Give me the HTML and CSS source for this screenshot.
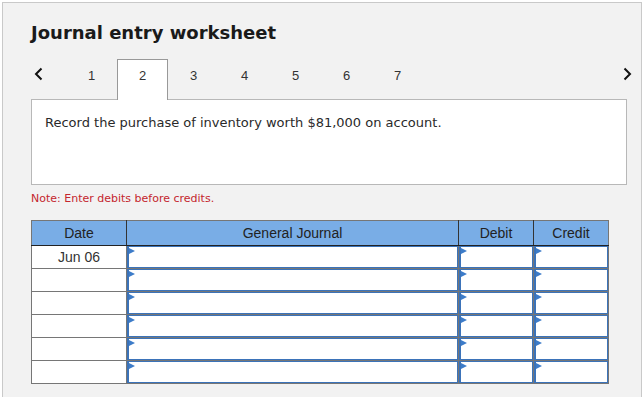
FILE: index.html
```html
<!DOCTYPE html>
<html>
<head>
<meta charset="utf-8">
<title>Journal entry worksheet</title>
<link rel="stylesheet" href="styles.css">
</head>
<body>
<div class="panel">
  <h1 class="title">Journal entry worksheet</h1>
  <div class="tabs">
    <span class="nav prev"><svg width="9" height="14" viewBox="0 0 9 14"><polyline points="7.5,1.5 2,7 7.5,12.5" fill="none" stroke="#111" stroke-width="2"/></svg></span>
    <span class="tab">1</span>
    <span class="tab active">2</span>
    <span class="tab">3</span>
    <span class="tab">4</span>
    <span class="tab">5</span>
    <span class="tab">6</span>
    <span class="tab">7</span>
    <span class="spacer"></span>
    <span class="nav next"><svg width="9" height="14" viewBox="0 0 9 14"><polyline points="1.5,1.5 7,7 1.5,12.5" fill="none" stroke="#111" stroke-width="2"/></svg></span>
  </div>
  <div class="prompt">Record the purchase of inventory worth $81,000 on account.</div>
  <p class="note">Note: Enter debits before credits.</p>
  <table class="journal">
    <colgroup>
      <col class="c-date"><col class="c-gj"><col class="c-amt"><col class="c-amt">
    </colgroup>
    <thead>
      <tr><th>Date</th><th>General Journal</th><th>Debit</th><th>Credit</th></tr>
    </thead>
    <tbody>
      <tr><td class="date">Jun 06</td><td class="in"><div class="field"></div></td><td class="in"><div class="field"></div></td><td class="in"><div class="field"></div></td></tr>
      <tr><td class="date"></td><td class="in"><div class="field"></div></td><td class="in"><div class="field"></div></td><td class="in"><div class="field"></div></td></tr>
      <tr><td class="date"></td><td class="in"><div class="field"></div></td><td class="in"><div class="field"></div></td><td class="in"><div class="field"></div></td></tr>
      <tr><td class="date"></td><td class="in"><div class="field"></div></td><td class="in"><div class="field"></div></td><td class="in"><div class="field"></div></td></tr>
      <tr><td class="date"></td><td class="in"><div class="field"></div></td><td class="in"><div class="field"></div></td><td class="in"><div class="field"></div></td></tr>
      <tr><td class="date"></td><td class="in"><div class="field"></div></td><td class="in"><div class="field"></div></td><td class="in"><div class="field"></div></td></tr>
    </tbody>
  </table>
</div>
</body>
</html>
```
FILE: styles.css
```css
html, body {
  margin: 0;
  background: #fff;
  font-family: "DejaVu Sans", Verdana, sans-serif;
  overflow: hidden;
}
.panel {
  box-sizing: border-box;
  height: 395px;
  margin: 2px 1px 0 2px;
  border: 1px solid #c9c9c9;
  border-bottom: 0;
  background: #f2f2f2;
  padding: 19px 14px 0 28px;
}
.title {
  margin: 0;
  font-size: 18px;
  line-height: 22px;
  font-weight: bold;
  color: #1a1a1a;
}
.tabs {
  display: flex;
  height: 40px;
  margin-top: 15px;
  margin-right: -14px;
  position: relative;
  z-index: 1;
}
.nav {
  display: flex;
  align-items: flex-start;
  padding-top: 8px;
}
.nav.prev {
  width: 35px;
  box-sizing: border-box;
  padding-left: 3px;
}
.nav.next {
  padding-right: 9px;
}
.spacer { flex: 1; }
.tab {
  width: 49px;
  border: 1px solid transparent;
  border-bottom: 0;
  padding-top: 8px;
  text-align: center;
  font-family: "Liberation Sans", Arial, sans-serif;
  font-size: 13px;
  line-height: 15px;
  color: #333;
}
.tab.active {
  background: #fff;
  border-color: #999;
  margin-bottom: -1px;
}
.prompt {
  height: 84px;
  box-sizing: content-box;
  background: #fff;
  border: 1px solid #b8b8b8;
  padding: 0 13px;
  font-size: 13px;
  line-height: 16px;
  color: #2a2a2a;
}
.prompt::before {
  content: "";
  display: block;
  height: 15px;
}
.note {
  margin: 7px 0 0;
  font-size: 11px;
  line-height: 13px;
  color: #c4262e;
}
.journal {
  margin-top: 15px;
  width: 577px;
  table-layout: fixed;
  border-collapse: collapse;
  border: 1px solid #767676;
  font-family: "Liberation Sans", Arial, sans-serif;
  font-size: 14px;
}
.c-date { width: 95px; }
.c-gj { width: 332px; }
.c-amt { width: 75px; }
.journal th {
  height: 24px;
  padding: 0;
  background: #79ade6;
  color: #222;
  font-weight: normal;
  border-right: 1px solid #333;
  border-bottom: 1px solid #222;
  vertical-align: middle;
}
.journal th:last-child { border-right: 1px solid #767676; }
.journal td {
  height: 22px;
  padding: 0;
  border: 1px solid #767676;
  background: #fff;
}
.journal td.date {
  text-align: center;
  color: #333;
  vertical-align: top;
  padding-top: 3px;
  height: 19px;
}
.field {
  position: relative;
  box-sizing: border-box;
  height: 22px;
  border: 1px solid #3b73b9;
  border-left-width: 2px;
  background: #fff;
}
.field::before {
  content: "";
  position: absolute;
  left: 0;
  top: 1px;
  border-left: 6px solid #3d7cc9;
  border-top: 3px solid transparent;
  border-bottom: 3px solid transparent;
}
```
